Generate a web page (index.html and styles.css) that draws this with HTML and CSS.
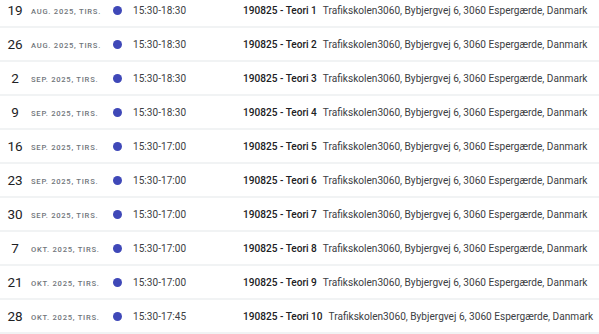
FILE: index.html
```html
<!DOCTYPE html>
<html lang="da">
<head>
<meta charset="utf-8">
<link rel="stylesheet" href="styles.css">
</head>
<body>
<div class="agenda">
  <div class="row"><div class="day">19</div><div class="month">aug. 2025, tirs.</div><div class="dot"></div><div class="time">15:30-18:30</div><div class="event"><span class="title">190825 - Teori 1</span><span class="place">Trafikskolen3060, Bybjergvej 6, 3060 Espergærde, Danmark</span></div></div>
  <div class="row"><div class="day">26</div><div class="month">aug. 2025, tirs.</div><div class="dot"></div><div class="time">15:30-18:30</div><div class="event"><span class="title">190825 - Teori 2</span><span class="place">Trafikskolen3060, Bybjergvej 6, 3060 Espergærde, Danmark</span></div></div>
  <div class="row"><div class="day">2</div><div class="month">sep. 2025, tirs.</div><div class="dot"></div><div class="time">15:30-18:30</div><div class="event"><span class="title">190825 - Teori 3</span><span class="place">Trafikskolen3060, Bybjergvej 6, 3060 Espergærde, Danmark</span></div></div>
  <div class="row"><div class="day">9</div><div class="month">sep. 2025, tirs.</div><div class="dot"></div><div class="time">15:30-18:30</div><div class="event"><span class="title">190825 - Teori 4</span><span class="place">Trafikskolen3060, Bybjergvej 6, 3060 Espergærde, Danmark</span></div></div>
  <div class="row"><div class="day">16</div><div class="month">sep. 2025, tirs.</div><div class="dot"></div><div class="time">15:30-17:00</div><div class="event"><span class="title">190825 - Teori 5</span><span class="place">Trafikskolen3060, Bybjergvej 6, 3060 Espergærde, Danmark</span></div></div>
  <div class="row"><div class="day">23</div><div class="month">sep. 2025, tirs.</div><div class="dot"></div><div class="time">15:30-17:00</div><div class="event"><span class="title">190825 - Teori 6</span><span class="place">Trafikskolen3060, Bybjergvej 6, 3060 Espergærde, Danmark</span></div></div>
  <div class="row"><div class="day">30</div><div class="month">sep. 2025, tirs.</div><div class="dot"></div><div class="time">15:30-17:00</div><div class="event"><span class="title">190825 - Teori 7</span><span class="place">Trafikskolen3060, Bybjergvej 6, 3060 Espergærde, Danmark</span></div></div>
  <div class="row"><div class="day">7</div><div class="month">okt. 2025, tirs.</div><div class="dot"></div><div class="time">15:30-17:00</div><div class="event"><span class="title">190825 - Teori 8</span><span class="place">Trafikskolen3060, Bybjergvej 6, 3060 Espergærde, Danmark</span></div></div>
  <div class="row"><div class="day">21</div><div class="month">okt. 2025, tirs.</div><div class="dot"></div><div class="time">15:30-17:00</div><div class="event"><span class="title">190825 - Teori 9</span><span class="place">Trafikskolen3060, Bybjergvej 6, 3060 Espergærde, Danmark</span></div></div>
  <div class="row"><div class="day">28</div><div class="month">okt. 2025, tirs.</div><div class="dot"></div><div class="time">15:30-17:45</div><div class="event"><span class="title">190825 - Teori 10</span><span class="place">Trafikskolen3060, Bybjergvej 6, 3060 Espergærde, Danmark</span></div></div>
</div>
</body>
</html>
```

FILE: styles.css
```css
html, body {
  margin: 0;
  padding: 0;
  background: #ffffff;
  overflow: hidden;
}
body {
  font-family: Roboto, "Noto Sans", sans-serif;
  color: #3c4043;
}
.agenda {
  margin-top: -6px;
  display: flex;
  flex-direction: column;
}
.row {
  height: 32px;
  border-bottom: 2px solid #f1f3f4;
  display: flex;
  align-items: center;
  white-space: nowrap;
}
.row > div {
  flex-shrink: 0;
}
.day {
  width: 22px;
  margin-left: 4px;
  text-align: center;
  font-size: 13.5px;
  color: #202124;
}
.month {
  width: 82px;
  margin-left: 5px;
  font-size: 7.6px;
  letter-spacing: 0.75px;
  text-transform: uppercase;
  color: #70757a;
  font-weight: 500;
  padding-top: 2px;
}
.dot {
  width: 9px;
  height: 9px;
  border-radius: 50%;
  background: #3f48b8;
}
.time {
  width: 110px;
  margin-left: 11px;
  font-size: 10px;
  letter-spacing: 0.05px;
  color: #3c4043;
}
.event {
  font-size: 10.1px;
}
.title {
  font-weight: 500;
  color: #202124;
  margin-right: 6px;
}
.place {
  color: #3c4043;
}
```
